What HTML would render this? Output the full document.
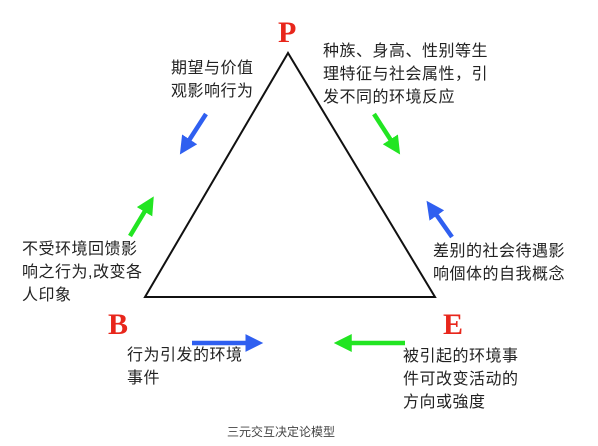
<!DOCTYPE html>
<html><head><meta charset="utf-8"><style>
body{margin:0;width:598px;height:446px;background:#fff;position:relative;overflow:hidden;font-family:"Liberation Sans","Noto Sans CJK SC",sans-serif;color:#222}
.t{position:absolute;font-size:16px;line-height:23px;white-space:nowrap;letter-spacing:0.5px}
.L{position:absolute;font-family:"Liberation Serif",serif;font-weight:bold;color:#e8261b;font-size:30px;line-height:30px}
</style></head><body>
<svg width="598" height="446" style="position:absolute;left:0;top:0">
<defs>
<marker id="b" markerWidth="4" markerHeight="4" refX="1.5" refY="2" orient="auto" markerUnits="strokeWidth"><path d="M0,0 L4,2 L0,4 Z" fill="#2f5ff0"/></marker>
<marker id="g" markerWidth="4" markerHeight="4" refX="1.5" refY="2" orient="auto" markerUnits="strokeWidth"><path d="M0,0 L4,2 L0,4 Z" fill="#22e522"/></marker>
</defs>
<polygon points="288,53 145,297 435,297" fill="none" stroke="#111" stroke-width="2"/>
<line x1="206" y1="114" x2="186" y2="145" stroke="#2f5ff0" stroke-width="4.5" marker-end="url(#b)"/>
<line x1="374" y1="114" x2="394" y2="145" stroke="#22e522" stroke-width="4.5" marker-end="url(#g)"/>
<line x1="130" y1="236" x2="148" y2="206" stroke="#22e522" stroke-width="4.5" marker-end="url(#g)"/>
<line x1="452" y1="237" x2="433" y2="210" stroke="#2f5ff0" stroke-width="4.5" marker-end="url(#b)"/>
<line x1="192" y1="343" x2="252" y2="343" stroke="#2f5ff0" stroke-width="4.5" marker-end="url(#b)"/>
<line x1="405" y1="343" x2="345" y2="343" stroke="#22e522" stroke-width="4.5" marker-end="url(#g)"/>
</svg>
<div class="L" style="left:278px;top:18px">P</div>
<div class="L" style="left:108px;top:310px">B</div>
<div class="L" style="left:443px;top:310px">E</div>
<div class="t" style="left:171px;top:57px">期望与价值<br>观影响行为</div>
<div class="t" style="left:323px;top:40px">种族、身高、性别等生<br>理特征与社会属性，引<br>发不同的环境反应</div>
<div class="t" style="left:22px;top:238px">不受环境回馈影<br>响之行为,改变各<br>人印象</div>
<div class="t" style="left:433px;top:240px">差别的社会待遇影<br>响個体的自我概念</div>
<div class="t" style="left:127px;top:344px">行为引发的环境<br>事件</div>
<div class="t" style="left:403px;top:345px">被引起的环境事<br>件可改变活动的<br>方向或強度</div>
<div style="position:absolute;left:227px;top:423px;font-size:12px;color:#444">三元交互决定论模型</div>
</body></html>
